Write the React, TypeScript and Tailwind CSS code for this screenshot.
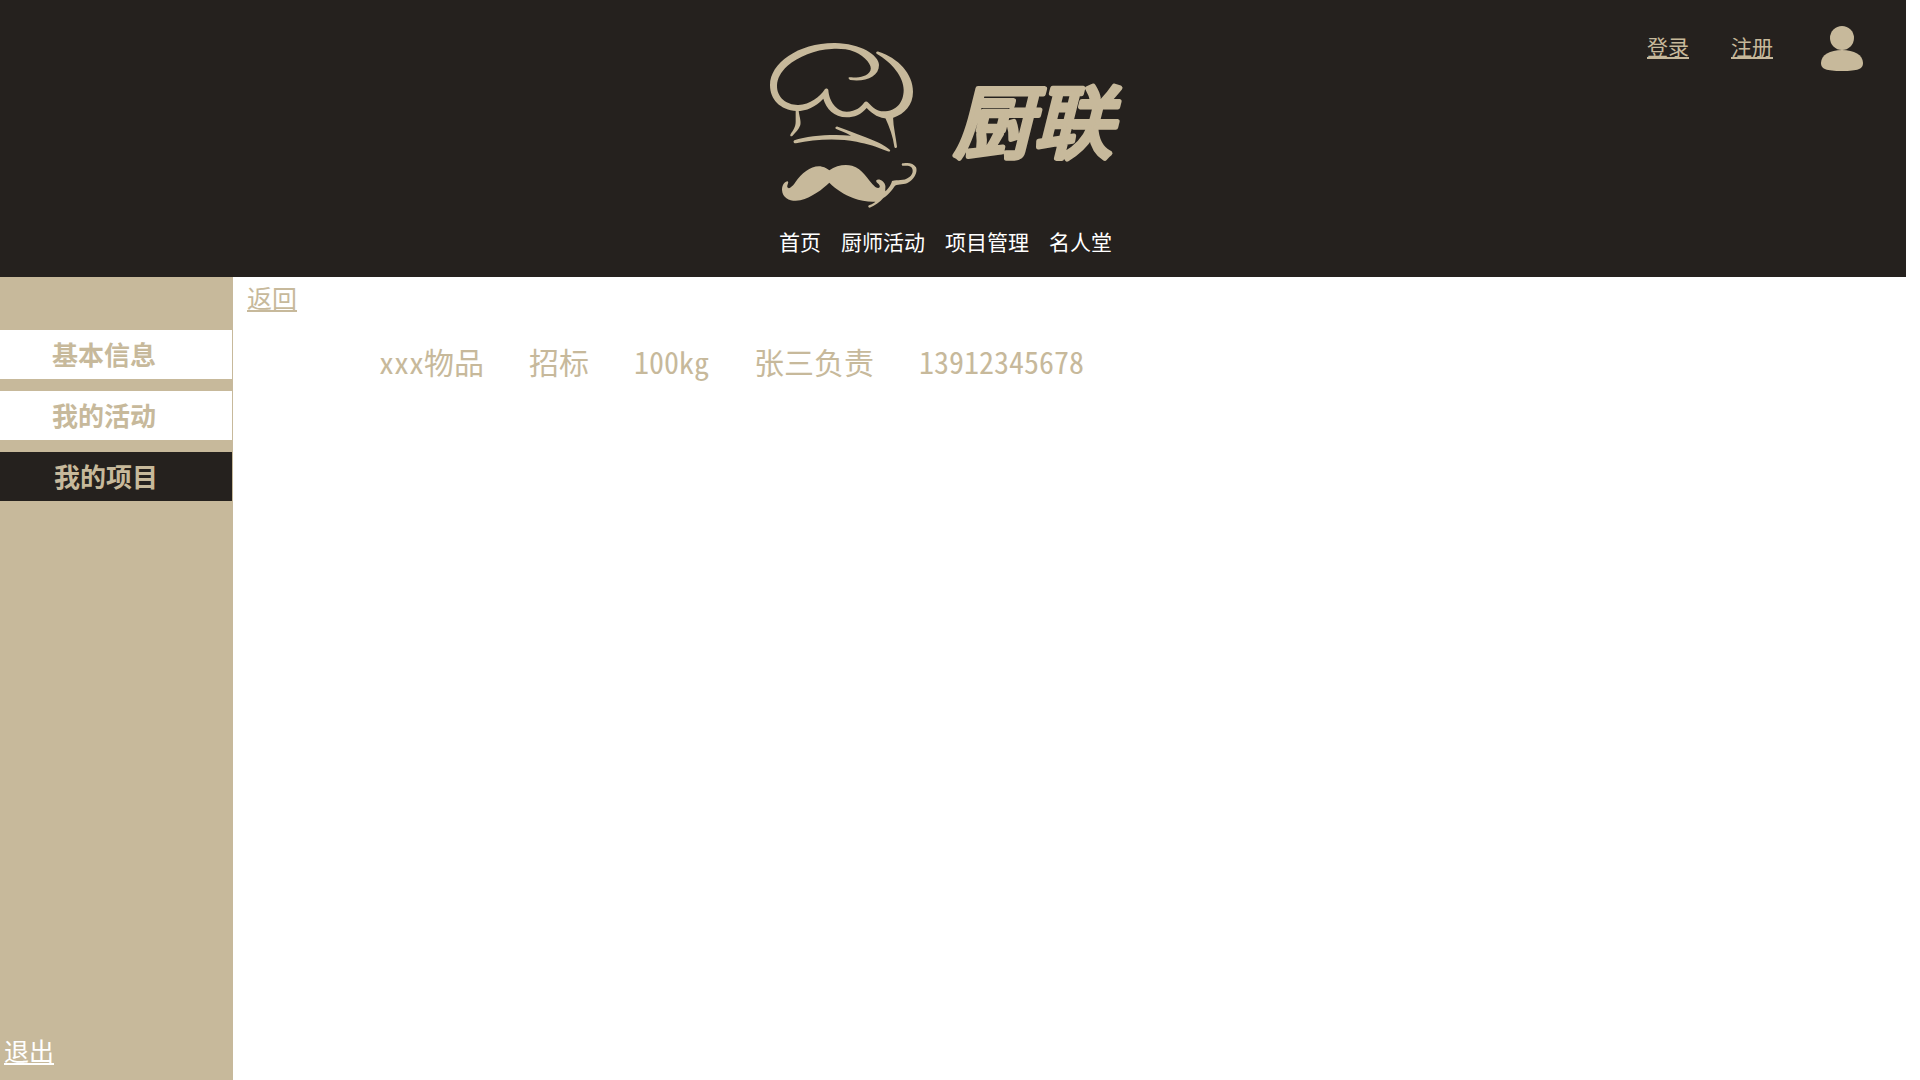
const navItems = ["首页", "厨师活动", "项目管理", "名人堂"];

const menuItems = [
  { label: "基本信息", active: false },
  { label: "我的活动", active: false },
  { label: "我的项目", active: true },
];

const project = ["xxx物品", "招标", "100kg", "张三负责", "13912345678"];

function ChefMark() {
  return (
    <svg viewBox="60 36 441 501" className="h-[167px] w-[147px] shrink-0" fill="#c7b99b" aria-hidden="true">
      <path d="M298 142C325 144 352 140 361 122C369 107 345 79 315 66C290 56 265 56 245 57C195 59 145 80 112 108C92 127 82 145 81 166C80 204 112 226 145 225C180 224 210 200 223 180C226 174 233 174 235 180C237 212 258 245 290 245C318 244 334 230 342 218Q348 211 355 218C369 233 382 244 400 244C440 244 461 216 461 180C461 140 425 97 380 71C376 67 380 63 386 65C444 84 489 130 489 185C489 225 464 251 430 263C400 271 372 258 350 234C333 254 313 262 290 262C252 262 228 235 220 206C196 231 170 243 140 243C90 240 60 208 60 165C60 100 145 38 255 39C330 40 387 75 387 105C387 140 347 156 301 150C295 148 294 142 298 142Z" />
      <path d="M137 240L146 240C147 258 154 272 151 285C147 298 137 307 127 318C122 321 119 317 122 312C130 300 137 290 137 275Z" />
      <path d="M405 262L429 260C430 292 438 322 441 350C440 355 434 355 433 350C429 320 419 292 405 262Z" />
      <path d="M133 331C175 317 245 312 303 317C287 307 270 302 257 296C255 292 258 289 263 290C287 298 315 310 345 321C375 332 405 346 420 360C422 364 418 366 413 364C380 349 352 342 320 335C262 324 190 328 138 340C130 341 129 334 133 331Z" />
      <path d="M238 421C258 405 287 402 306 407C339 416 350 447 376 471C384 475 391 475 389 467C387 460 377 459 379 451C386 444 404 454 406 467C407 473 405 478 406 484C414 478 424 463 426 453C443 448 461 455 477 442C489 433 491 420 484 412C477 405 468 408 457 407C453 403 456 399 461 400C476 397 491 400 498 412C504 426 492 448 476 457C463 466 447 461 435 467C425 481 417 493 400 504C389 516 376 527 359 533C353 532 354 526 359 525C368 521 374 518 376 515C356 516 330 513 311 505C281 493 258 478 238 458C217 478 187 501 151 511C126 516 98 508 96 480C96 465 104 454 113 454C118 459 110 464 112 472C118 480 130 466 136 457C156 428 187 404 216 410C226 412 232 416 238 421Z" />
    </svg>
  );
}

function Wordmark() {
  return (
    <svg
      viewBox="0 0 168 91"
      className="h-[91px] w-[168px] shrink-0 overflow-visible text-[80px] font-normal italic"
      fill="#c7b99b"
      stroke="#c7b99b"
      strokeWidth="5"
      strokeLinejoin="round"
    >
      <text x="0" y="72">
        厨联
      </text>
    </svg>
  );
}

function UserIcon() {
  return (
    <svg viewBox="0 0 42 45" className="h-[45px] w-[42px]" fill="#c7b99b" aria-hidden="true">
      <circle cx="21" cy="12" r="12" />
      <path d="M21 24C33 24 42 29 42 37C42 43 37 45 21 45C5 45 0 43 0 37C0 29 9 24 21 24Z" />
    </svg>
  );
}

export default function App() {
  return (
    <div className="flex min-h-screen flex-col bg-white pr-[14px] font-['Noto_Sans_CJK_SC',sans-serif] text-[#c7b99b]">
      <header className="grid grid-cols-[1fr_auto_1fr] bg-[#25211e] pr-[43px] pb-[22px] pl-7">
        <div className="col-start-2 flex flex-col items-center pt-[42px]">
          <a href="#" className="flex items-center gap-9">
            <ChefMark />
            <Wordmark />
          </a>
          <nav className="mt-[18px] flex gap-5 text-[21px] leading-7 text-white">
            {navItems.map((item) => (
              <a key={item} href="#">
                {item}
              </a>
            ))}
          </nav>
        </div>
        <div className="flex items-start justify-end pt-[26px] text-[21px] leading-7">
          <a href="#" className="mt-[6px] mr-[42px] underline">
            登录
          </a>
          <a href="#" className="mt-[6px] mr-12 underline">
            注册
          </a>
          <button type="button" aria-label="用户">
            <UserIcon />
          </button>
        </div>
      </header>

      <div className="flex flex-1">
        <aside className="flex w-[233px] shrink-0 flex-col bg-[#c7b99b] pt-[53px] pr-px">
          <nav className="flex flex-col gap-3 text-[26px] font-bold">
            {menuItems.map(({ label, active }) => (
              <a
                key={label}
                href="#"
                className={active ? "bg-[#25211e] pb-[2px] pl-[54px] leading-[47px]" : "bg-white pb-[2px] pl-[52px] leading-[47px]"}
              >
                {label}
              </a>
            ))}
          </nav>
          <a href="#" className="mt-auto mb-[10px] ml-1 self-start text-[25px] leading-10 text-white underline">
            退出
          </a>
        </aside>

        <main className="flex-1 pl-[14px]">
          <a href="#" className="inline-block text-[25px] leading-10 underline">
            返回
          </a>
          <ul className="mt-6 flex gap-[45px] pl-[132px] text-[30px] leading-10 [font-feature-settings:'hwid']">
            {project.map((field) => (
              <li key={field}>{field}</li>
            ))}
          </ul>
        </main>
      </div>
    </div>
  );
}
